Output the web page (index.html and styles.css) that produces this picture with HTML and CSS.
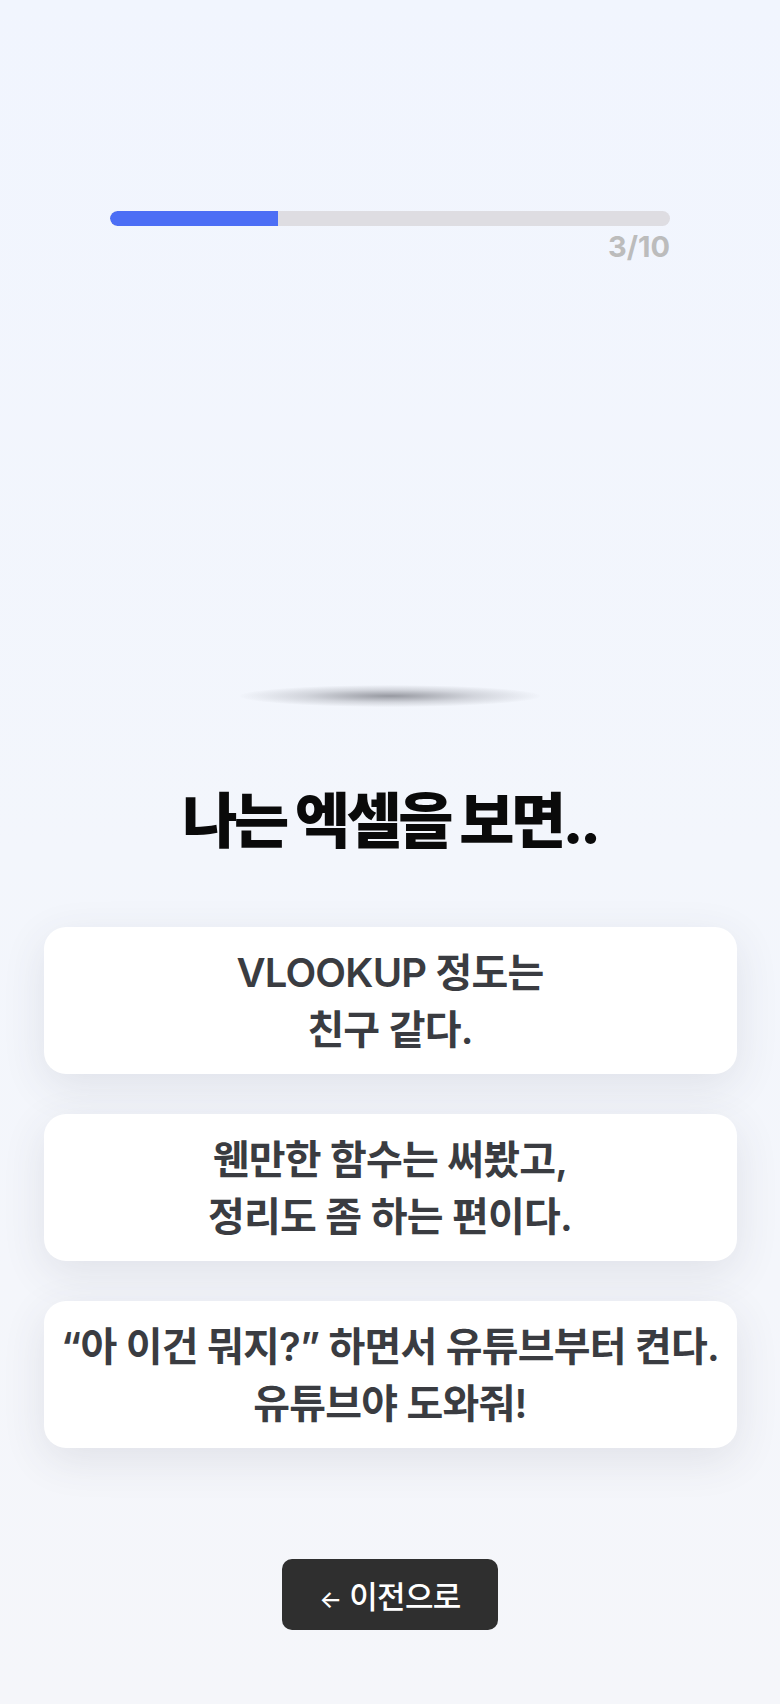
FILE: index.html
```html
<!DOCTYPE html>
<html lang="ko">
<head>
<meta charset="utf-8">
<title>엑셀 테스트</title>
<link rel="stylesheet" href="styles.css">
</head>
<body>
<main class="screen">
  <section class="progress">
    <div class="track"><div class="fill" style="width:30%"></div></div>
    <div class="count">3/10</div>
  </section>
  <div class="hero"><div class="hero-shadow"></div></div>
  <h1 class="question">나는 엑셀을 보면..</h1>
  <div class="options">
    <button class="option">VLOOKUP 정도는<br>친구 같다.</button>
    <button class="option">웬만한 함수는 써봤고,<br>정리도 좀 하는 편이다.</button>
    <button class="option">“아 이건 뭐지?” 하면서 유튜브부터 켠다.<br>유튜브야 도와줘!</button>
  </div>
  <div class="nav">
    <button class="back"><span class="arrow">←</span> 이전으로</button>
  </div>
</main>
</body>
</html>
```
FILE: styles.css
```css
* { box-sizing: border-box; }
html, body { margin: 0; padding: 0; }
body {
  width: 780px;
  min-height: 1704px;
  background: linear-gradient(180deg, #f1f5fe 0%, #f3f6fc 50%, #f5f6fa 100%);
  font-family: Inter, "Noto Sans CJK KR", sans-serif;
}
.screen {
  padding-top: 211px;
  display: flex;
  flex-direction: column;
  align-items: center;
}
.progress { width: 560px; }
.track {
  height: 15px;
  border-radius: 8px;
  background: #dedde2;
  overflow: hidden;
}
.fill { height: 100%; background: #4c6ef5; border-radius: 8px 0 0 8px; }
.count {
  margin-top: 3px;
  text-align: right;
  font-size: 29px;
  line-height: 35px;
  font-weight: 700;
  color: #bcbcbc;
  letter-spacing: 0;
}
.hero {
  height: 443px;
  width: 100%;
  display: flex;
  justify-content: center;
  align-items: flex-end;
}
.hero-shadow {
  width: 300px;
  height: 22px;
  border-radius: 50%;
  background: radial-gradient(ellipse at center, rgba(120,122,130,0.75) 0%, rgba(150,152,160,0.35) 40%, rgba(200,202,210,0) 72%);
}
.question {
  margin: 79px 0 0;
  font-size: 60px;
  line-height: 70px;
  font-weight: 800;
  color: #0a0a0a;
  letter-spacing: -0.06em;
  text-align: center;
}
.options {
  margin-top: 71px;
  width: 693px;
  display: flex;
  flex-direction: column;
  gap: 40px;
}
.option {
  height: 147px;
  border: none;
  border-radius: 22px;
  background: #ffffff;
  box-shadow: 0 12px 44px rgba(60, 64, 80, 0.11);
  font-family: inherit;
  font-size: 40px;
  line-height: 57px;
  font-weight: 600;
  color: #3a3c41;
  letter-spacing: -0.02em;
  text-align: center;
  padding: 0 10px;
}
.nav { margin-top: 111px; }
.back {
  width: 216px;
  height: 71px;
  border: none;
  border-radius: 10px;
  background: #2f2f2f;
  color: #ffffff;
  font-family: inherit;
  font-size: 31px;
  font-weight: 500;
  letter-spacing: -0.02em;
}
.arrow { font-size: 24px; }
```
